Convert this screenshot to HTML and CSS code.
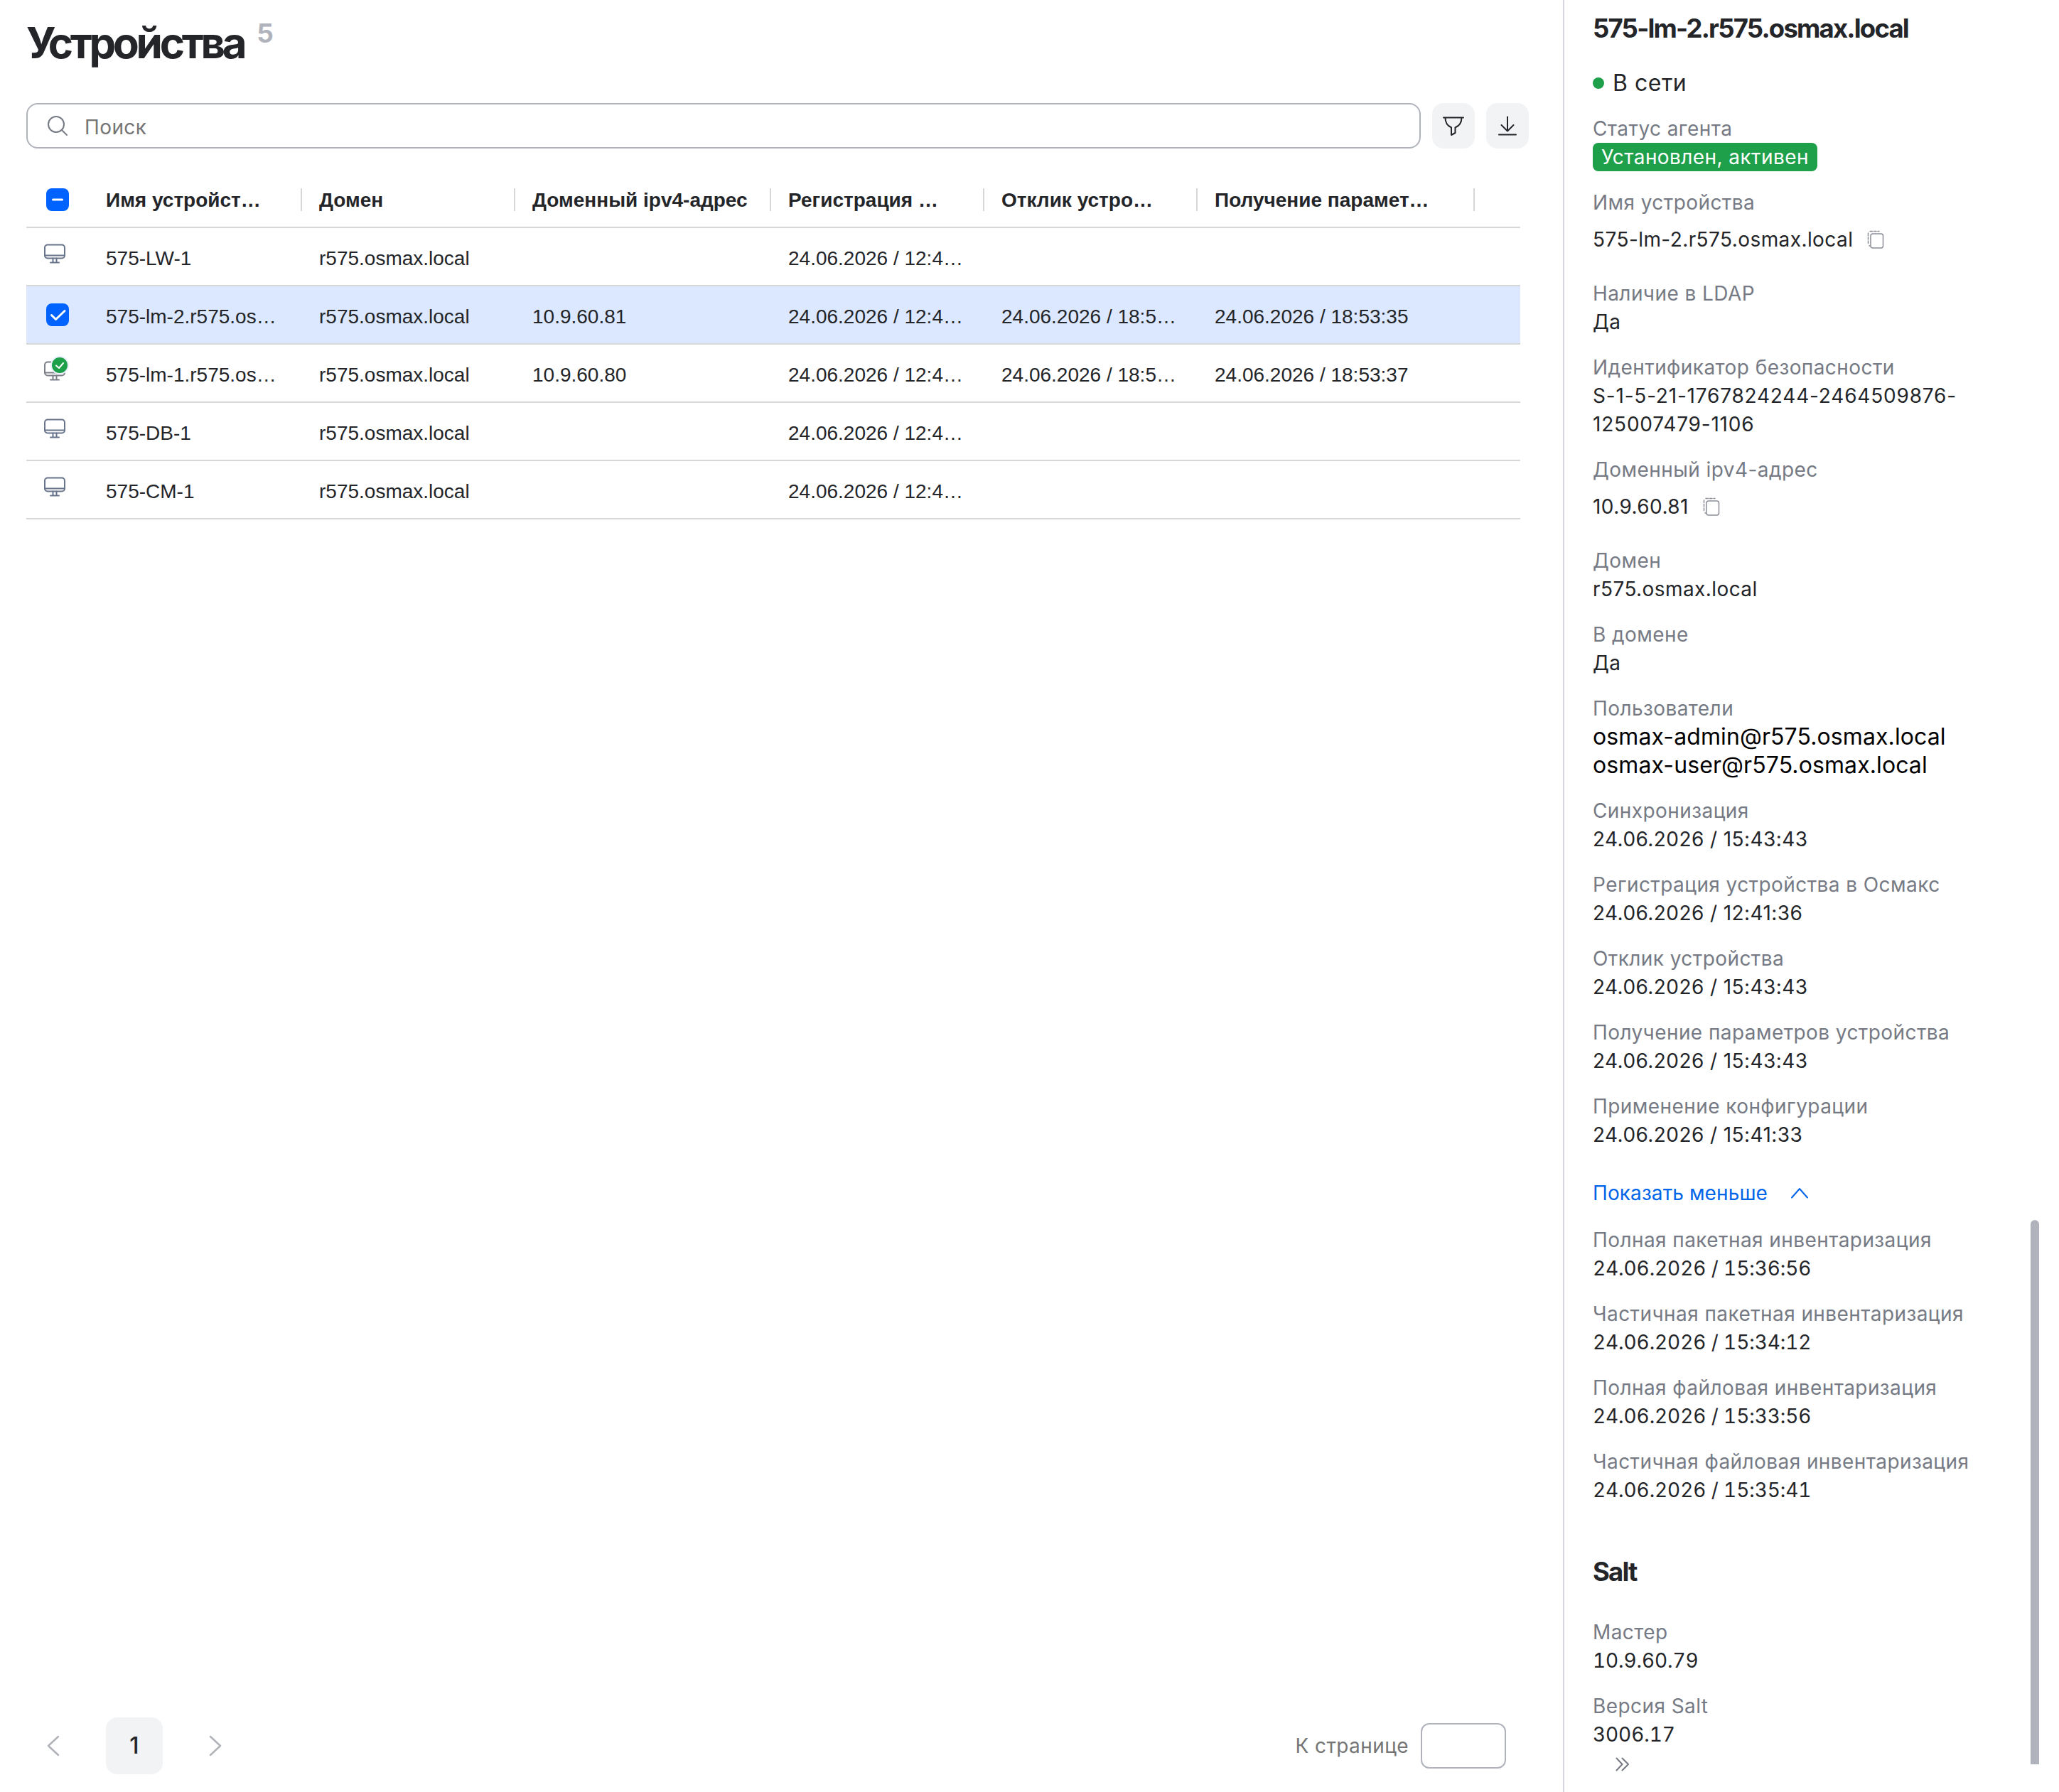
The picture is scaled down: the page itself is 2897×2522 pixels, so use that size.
FILE: index.html
```html
<!DOCTYPE html>
<html lang="ru">
<head>
    <meta charset="UTF-8">
    <meta name="viewport" content="width=device-width, initial-scale=1.0">
    <title>Устройства</title>
    <link rel="stylesheet" href="styles.css">
</head>

<body>
    <!-- Shared icons -->
    <svg class="sprite" aria-hidden="true">
        <symbol id="icon-monitor" viewBox="0 0 32 30">
            <rect x="2" y="2.5" width="28" height="19" rx="4"/>
            <path d="M2 17.5h28M13.5 21.5v5.500M18.500 21.500v5.500M10 27.500h12"/>
        </symbol>
        <symbol id="icon-copy" viewBox="0 0 24 26">
            <rect x="5" y="5" width="17.500" height="20" rx="3"/>
            <path d="M4 1.500h13M1.500 4v15M4 22h-1" stroke-dasharray="3.500 2"/>
        </symbol>
    </svg>

    <div class="page">
        <main class="main">
            <header class="page-header">
                <h1>Устройства</h1>
                <span class="count">5</span>
            </header>

            <div class="toolbar">
                <div class="search">
                    <svg class="icon" width="28" height="28" viewBox="0 0 28 28"><circle cx="12" cy="12" r="11"/><path d="M20 20l7 7"/></svg>
                    <span>Поиск</span>
                </div>
                <button class="tool-button" title="Фильтр">
                    <svg width="30" height="28" viewBox="0 0 30 28"><path d="M1 2.500h28M3.500 2.500c0 7 3 11.500 8.500 14v10.500l5.500-3v-7.500c6-2.500 9-7 9-14"/></svg>
                </button>
                <button class="tool-button" title="Скачать">
                    <svg width="26" height="28" viewBox="0 0 26 28"><path d="M13 1.500v20M4.500 13l8.500 8.500 8.500-8.500M1 26.500h24"/></svg>
                </button>
            </div>

            <div class="table">
                <div class="row head">
                    <div class="cell select"><span class="checkbox"><svg width="32" height="32" viewBox="0 0 32 32"><path d="M9.500 16h13"/></svg></span></div>
                    <div class="cell">Имя устройст…</div>
                    <div class="cell">Домен</div>
                    <div class="cell">Доменный ipv4-адрес</div>
                    <div class="cell">Регистрация …</div>
                    <div class="cell">Отклик устро…</div>
                    <div class="cell">Получение парамет…</div>
                </div>
                <div class="row">
                    <div class="cell select"><svg class="monitor"><use href="#icon-monitor"/></svg></div>
                    <div class="cell">575-LW-1</div>
                    <div class="cell">r575.osmax.local</div>
                    <div class="cell"></div>
                    <div class="cell">24.06.2026 / 12:4…</div>
                    <div class="cell"></div>
                    <div class="cell"></div>
                </div>
                <div class="row selected">
                    <div class="cell select"><span class="checkbox"><svg width="32" height="32" viewBox="0 0 32 32"><path d="M7.500 16.500l6 6L26 10.500"/></svg></span></div>
                    <div class="cell">575-lm-2.r575.os…</div>
                    <div class="cell">r575.osmax.local</div>
                    <div class="cell">10.9.60.81</div>
                    <div class="cell">24.06.2026 / 12:4…</div>
                    <div class="cell">24.06.2026 / 18:5…</div>
                    <div class="cell">24.06.2026 / 18:53:35</div>
                </div>
                <div class="row">
                    <div class="cell select">
                        <span class="online">
                            <svg class="monitor"><use href="#icon-monitor"/></svg>
                            <svg class="online-badge" width="26" height="26" viewBox="0 0 26 26"><circle cx="13" cy="13" r="12"/><path d="M8 13.500l4 3.500 6-7"/></svg>
                        </span>
                    </div>
                    <div class="cell">575-lm-1.r575.os…</div>
                    <div class="cell">r575.osmax.local</div>
                    <div class="cell">10.9.60.80</div>
                    <div class="cell">24.06.2026 / 12:4…</div>
                    <div class="cell">24.06.2026 / 18:5…</div>
                    <div class="cell">24.06.2026 / 18:53:37</div>
                </div>
                <div class="row">
                    <div class="cell select"><svg class="monitor"><use href="#icon-monitor"/></svg></div>
                    <div class="cell">575-DB-1</div>
                    <div class="cell">r575.osmax.local</div>
                    <div class="cell"></div>
                    <div class="cell">24.06.2026 / 12:4…</div>
                    <div class="cell"></div>
                    <div class="cell"></div>
                </div>
                <div class="row">
                    <div class="cell select"><svg class="monitor"><use href="#icon-monitor"/></svg></div>
                    <div class="cell">575-CM-1</div>
                    <div class="cell">r575.osmax.local</div>
                    <div class="cell"></div>
                    <div class="cell">24.06.2026 / 12:4…</div>
                    <div class="cell"></div>
                    <div class="cell"></div>
                </div>
            </div>

            <footer class="pagination">
                <svg class="arrow" width="18" height="30" viewBox="0 0 18 30"><path d="M16 2L2 15l14 13"/></svg>
                <span class="current">1</span>
                <svg class="arrow" width="18" height="30" viewBox="0 0 18 30"><path d="M2 2l14 13L2 28"/></svg>
                <label class="goto" for="page">К странице</label>
                <input id="page" class="goto-input" type="text">
            </footer>
        </main>

        <aside class="panel">
            <div class="details">
                <h2>575-lm-2.r575.osmax.local</h2>
                <div class="status">В сети</div>

                <dl class="fields">
                    <div><dt>Статус агента</dt><dd><span class="tag">Установлен, активен</span></dd></div>
                    <div><dt>Имя устройства</dt><dd class="copyable">575-lm-2.r575.osmax.local <svg class="copy"><use href="#icon-copy"/></svg></dd></div>
                    <div><dt>Наличие в LDAP</dt><dd>Да</dd></div>
                    <div><dt>Идентификатор безопасности</dt><dd class="sid">S-1-5-21-1767824244-2464509876-<br>125007479-1106</dd></div>
                    <div><dt>Доменный ipv4-адрес</dt><dd class="copyable">10.9.60.81 <svg class="copy"><use href="#icon-copy"/></svg></dd></div>
                    <div><dt>Домен</dt><dd>r575.osmax.local</dd></div>
                    <div><dt>В домене</dt><dd>Да</dd></div>
                    <div><dt>Пользователи</dt><dd class="users">osmax-admin@r575.osmax.local<br>osmax-user@r575.osmax.local</dd></div>
                    <div><dt>Синхронизация</dt><dd>24.06.2026 / 15:43:43</dd></div>
                    <div><dt>Регистрация устройства в Осмакс</dt><dd>24.06.2026 / 12:41:36</dd></div>
                    <div><dt>Отклик устройства</dt><dd>24.06.2026 / 15:43:43</dd></div>
                    <div><dt>Получение параметров устройства</dt><dd>24.06.2026 / 15:43:43</dd></div>
                    <div><dt>Применение конфигурации</dt><dd>24.06.2026 / 15:41:33</dd></div>
                </dl>

                <a class="show-less">Показать меньше <svg width="24" height="16" viewBox="0 0 24 16"><path d="M1 14.500L12 2l11 12.500"/></svg></a>

                <dl class="fields tabular">
                    <div><dt>Полная пакетная инвентаризация</dt><dd>24.06.2026 / 15:36:56</dd></div>
                    <div><dt>Частичная пакетная инвентаризация</dt><dd>24.06.2026 / 15:34:12</dd></div>
                    <div><dt>Полная файловая инвентаризация</dt><dd>24.06.2026 / 15:33:56</dd></div>
                    <div><dt>Частичная файловая инвентаризация</dt><dd>24.06.2026 / 15:35:41</dd></div>
                </dl>

                <h2 class="section-title">Salt</h2>
                <dl class="fields tabular">
                    <div><dt>Мастер</dt><dd>10.9.60.79</dd></div>
                    <div><dt>Версия Salt</dt><dd>3006.17</dd></div>
                </dl>

                <svg class="collapse" width="20" height="20" viewBox="0 0 20 20"><path d="M1.500 1.500l8 8.500-8 8.500M9.500 1.500l8.500 8.500-8.500 8.500"/></svg>
            </div>
            <div class="scrollbar"></div>
        </aside>
    </div>
</body>
</html>
```
FILE: styles.css
```css
* {
    box-sizing: border-box;
}
body {
    margin: 0;
    background: #fff;
    color: #232529;
    font-family: Inter, sans-serif;
    font-size: 28px;
    line-height: 40px;
}
h1, h2, dl, dd {
    margin: 0;
}
svg {
    display: block;
    flex: none;
    fill: none;
    stroke: currentColor;
    stroke-width: 2;
    stroke-linecap: round;
    stroke-linejoin: round;
}
.sprite {
    position: absolute;
    width: 0;
    height: 0;
}
.page {
    display: flex;
    width: 2897px;
    height: 2522px;
    overflow: hidden;
}

/* Left part: device list */
.main {
    display: flex;
    flex-direction: column;
    width: 2199px;
    padding: 20px 48px 25px 37px;
}
.page-header {
    display: flex;
    gap: 18px;
    height: 125px;
    font-weight: 700;
}
h1 {
    font-size: 60px;
    line-height: 80px;
    letter-spacing: -4.3px;
}
.count {
    color: #b0b3bc;
    font-size: 37px;
    line-height: 54px;
}
.toolbar {
    display: flex;
    gap: 16px;
    height: 64px;
}
.search {
    display: flex;
    align-items: center;
    gap: 24px;
    width: 1962px;
    padding-left: 28px;
    border: 2px solid #b0b3bc;
    border-radius: 16px;
    color: #757575;
    letter-spacing: 0.4px;
}
.search span {
    padding-top: 3px;
}
.search .icon {
    color: #767a84;
}
.tool-button {
    display: flex;
    align-items: center;
    justify-content: center;
    width: 60px;
    height: 64px;
    padding: 0;
    border: 0;
    border-radius: 16px;
    background: #f2f3f5;
    color: #232529;
}

.table {
    width: 2102px;
    margin-top: 30px;
    font-family: "Liberation Sans", Arial, sans-serif;
}
.row {
    display: grid;
    grid-template-columns: 88px 300px 300px 360px 300px 300px 390px;
    height: 82px;
    border-bottom: 2px solid #d6d7d9;
}
.cell {
    padding: 23px 0 0 24px;
    white-space: nowrap;
}
.row.head .cell {
    height: 32px;
    margin-top: 26px;
    padding-top: 0;
    border-right: 2px solid #d6d7d9;
    line-height: 34px;
    font-weight: 700;
}
.row.head .select {
    border: 0;
    padding-left: 28px;
}
.row.selected {
    background: #dce8ff;
}
.select {
    padding-top: 21px;
}
.selected .select {
    padding: 24px 0 0 28px;
}
.checkbox {
    display: block;
    width: 32px;
    height: 32px;
    border-radius: 8px;
    background: #0062ff;
    color: #fff;
}
.checkbox svg {
    stroke-width: 3;
}
.monitor {
    width: 32px;
    height: 30px;
    color: #68748c;
}
.online {
    position: relative;
    display: block;
    padding-top: 1px;
}
.online .monitor {
    color: #7c7e88;
}
/* Green check mark over the monitor */
.online-badge {
    position: absolute;
    top: -5px;
    left: 10px;
    color: #fff;
}
.online-badge circle {
    fill: #1e9f4a;
    stroke: #e8eefa;
}

.pagination {
    display: flex;
    align-items: center;
    height: 80px;
    margin-top: auto;
    padding: 0 32px 0 29px;
}
.arrow {
    color: #b0b3b8;
    stroke-width: 2.5;
}
.current {
    width: 80px;
    height: 80px;
    margin: 0 65px;
    border-radius: 16px;
    background: #f2f3f5;
    font-size: 32px;
    font-weight: 500;
    line-height: 80px;
    text-align: center;
}
.goto {
    margin-left: auto;
    color: #757575;
    letter-spacing: 0.4px;
}
.goto-input {
    width: 120px;
    height: 64px;
    margin-left: 17px;
    border: 2px solid #b0b3bc;
    border-radius: 12px;
}

/* Right part: details of the selected device */
.panel {
    display: flex;
    width: 698px;
    border-left: 2px solid #d5d6de;
}
.details {
    width: 656px;
    padding: 16px 0 0 40px;
}
h2 {
    height: 48px;
    font-size: 36.5px;
    font-weight: 700;
    line-height: 48px;
    letter-spacing: -1.8px;
    white-space: nowrap;
}
.status {
    display: flex;
    align-items: center;
    gap: 12px;
    height: 40px;
    margin: 33px 0 24px;
    font-size: 32px;
    letter-spacing: 0.5px;
}
.status::before {
    content: "";
    width: 16px;
    height: 16px;
    border-radius: 50%;
    background: #1e9f4a;
}
.fields {
    display: flex;
    flex-direction: column;
    gap: 24px;
    letter-spacing: 0.42px;
    white-space: nowrap;
}
dt {
    color: #767a84;
}
.tag {
    display: block;
    width: 316px;
    padding-left: 12px;
    border-radius: 8px;
    background: #1e9f4a;
    color: #fff;
}
.copyable {
    display: flex;
    align-items: center;
    gap: 20px;
    height: 64px;
}
.copy {
    width: 24px;
    height: 26px;
    color: #8a8d96;
    stroke-width: 1.5;
}
.sid {
    letter-spacing: 0.8px;
}
.users {
    color: #000;
    font-size: 32px;
    letter-spacing: 0.1px;
}
.tabular dd {
    font-variant-numeric: tabular-nums;
    letter-spacing: -0.1px;
}
.show-less {
    display: flex;
    align-items: center;
    gap: 33px;
    height: 40px;
    margin: 42px 0 26px;
    color: #0065e8;
    letter-spacing: 0.1px;
}
.section-title {
    margin: 71px 0 41px;
}
.collapse {
    margin: 12px 0 0 32px;
    color: #767a84;
}
.scrollbar {
    width: 12px;
    height: 766px;
    margin-top: 1717px;
    border-radius: 6px 6px 0 0;
    background: #b0b3bc;
}
```
